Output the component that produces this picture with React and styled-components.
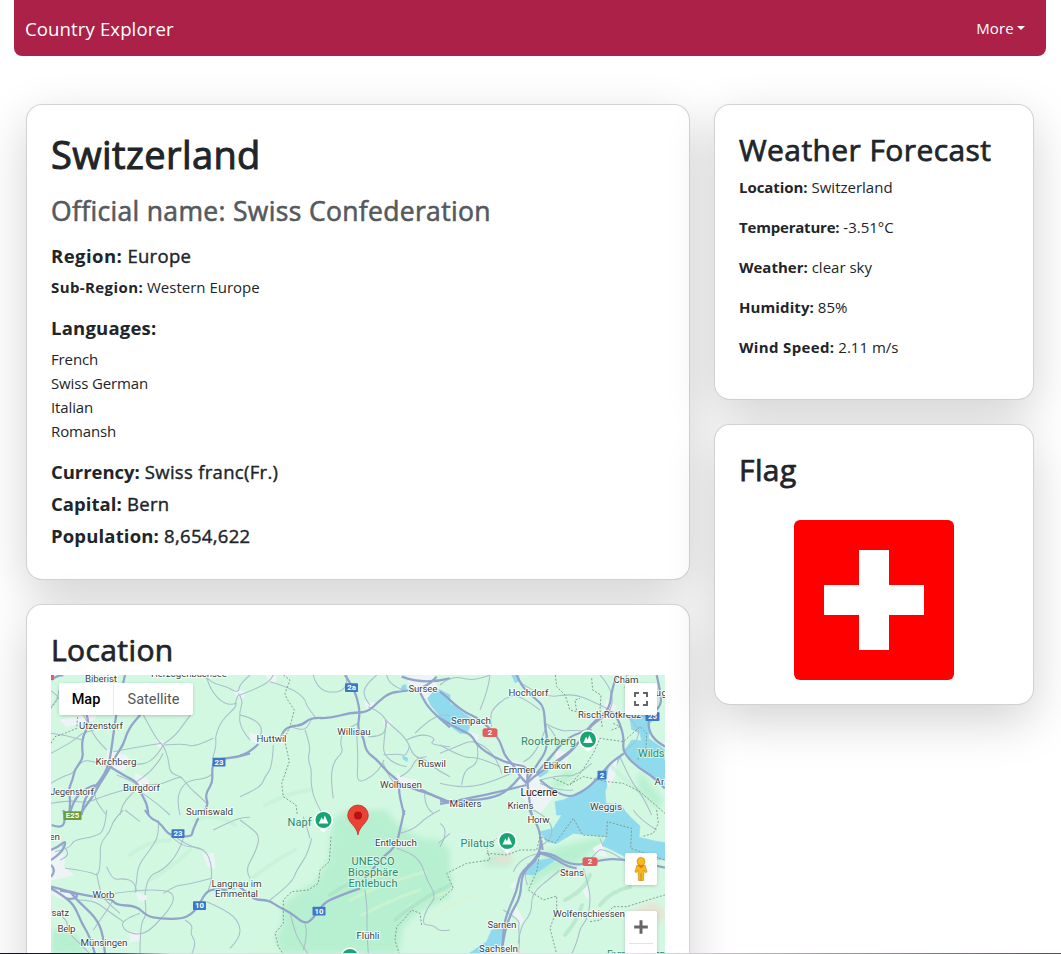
import React from "react";
import styled, { createGlobalStyle } from "styled-components";

const GlobalStyle = createGlobalStyle`
  *, *::before, *::after { box-sizing: border-box; }
  body {
    margin: 0;
    height: 954px;
    overflow: hidden;
    background: #fff;
    color: #212529;
    font-family: "Open Sans", "Noto Sans", sans-serif;
    font-size: 15px;
    line-height: 24px;
  }
  h1, h2, h3, h5, p, ul { margin: 0; padding: 0; }
`;

const Page = styled.div`
  position: relative;
  height: 954px;
  padding: 0 15px 0 14px;
  overflow: hidden;
`;

const Navbar = styled.nav`
  display: flex;
  align-items: center;
  justify-content: space-between;
  height: 56px;
  padding: 2px 21px 0 11px;
  border-radius: 0 0 8px 8px;
  background: #ab2148;
  color: #fff;
`;

const Brand = styled.span`
  font-size: 18.6px;
  line-height: 30px;
  letter-spacing: 0.1px;
`;

const MoreButton = styled.button`
  display: flex;
  align-items: center;
  gap: 3px;
  margin-bottom: 2px;
  padding: 0;
  border: 0;
  background: none;
  color: #fff;
  font: inherit;
  letter-spacing: 0.2px;
`;

const Caret = styled.span`
  border-top: 4.5px solid #fff;
  border-left: 4.5px solid transparent;
  border-right: 4.5px solid transparent;
`;

const Columns = styled.main`
  display: grid;
  grid-template-columns: 664px 320px;
  gap: 24px;
  padding: 48px 12px 0;
`;

const Column = styled.div`
  display: flex;
  flex-direction: column;
  gap: 24px;
`;

const Card = styled.section`
  flex: none;
  height: ${(p) => p.$height}px;
  padding: 24px;
  border: 1px solid rgba(0, 0, 0, 0.175);
  border-radius: 16px;
  background: #fff;
  box-shadow: 0 16px 48px rgba(0, 0, 0, 0.175);
`;

const CountryName = styled.h1`
  font-size: 38px;
  font-weight: 400;
  line-height: 50px;
  letter-spacing: 0.4px;
  -webkit-text-stroke: 1px currentColor;
  margin-bottom: 14px;
`;

const OfficialName = styled.h3`
  color: #55595d;
  font-size: 26.5px;
  font-weight: 400;
  line-height: 36px;
  letter-spacing: 0.33px;
  -webkit-text-stroke: 0.6px currentColor;
  margin-bottom: 14px;
`;

const CardTitle = styled.h2`
  font-size: 30px;
  font-weight: 400;
  line-height: 41px;
  letter-spacing: 0.4px;
  -webkit-text-stroke: 0.75px currentColor;
  margin-bottom: 5px;
`;

const Bold = styled.b`
  font-weight: 700;
  letter-spacing: ${(p) => p.$track || 0}px;
  -webkit-text-stroke: 0;
`;

const Fact = styled.h5`
  font-size: 18.5px;
  font-weight: 400;
  line-height: 26px;
  letter-spacing: 0.3px;
  -webkit-text-stroke: 0.4px currentColor;
  margin-bottom: 6px;
`;

const Line = styled.p`
  margin-bottom: 16px;
`;

const LanguageList = styled.ul`
  list-style: none;
  margin-bottom: 16px;
  letter-spacing: -0.13px;
`;

const FlagImage = styled.svg`
  display: block;
  width: 160px;
  height: 160px;
  margin: 30px auto 0;
  border-radius: 6px;
`;

const MapFrame = styled.div`
  position: relative;
  width: 614px;
  height: 450px;
  overflow: hidden;
  background: #d3f8e2;
  font-family: Roboto, sans-serif;
`;

const MapDrawing = styled.svg`
  display: block;
  width: 614px;
  height: 279px;
`;

const MapTypes = styled.div`
  position: absolute;
  top: 8px;
  left: 8px;
  display: flex;
  border-radius: 2px;
  background: #fff;
  box-shadow: 0 1px 4px -1px rgba(0, 0, 0, 0.3);
`;

const MapType = styled.button`
  width: ${(p) => p.$width}px;
  height: 32px;
  padding: 0;
  border: 0;
  border-left: ${(p) => (p.$active ? "0" : "1px solid #ececec")};
  background: none;
  color: ${(p) => (p.$active ? "#000" : "#565656")};
  font: ${(p) => (p.$active ? 500 : 400)} 14.5px Roboto, sans-serif;
`;

const MapControl = styled.button`
  position: absolute;
  top: ${(p) => p.$top}px;
  right: 8px;
  display: flex;
  align-items: flex-start;
  justify-content: center;
  width: 32px;
  height: ${(p) => p.$height || 32}px;
  padding: 0;
  border: 0;
  border-radius: 2px;
  background: #fff;
  box-shadow: 0 1px 4px -1px rgba(0, 0, 0, 0.3);
`;

const WindowEdge = styled.div`
  position: absolute;
  left: 0;
  right: 0;
  bottom: 0;
  height: 1px;
  background: linear-gradient(90deg, #17122b 0, #17122b 80px, #4b3a5c 120px, #e8d4ea 170px, #eadcf0 630px, #cfc4d0 700px, #57505a 1061px);
`;

// Each tile holds its geometry in its own units, three to a pixel.
const tiles = [
  {
    at: [40, 670],
    urban: ["M60 150L170 135L160 150L80 170Z", "M205 240L265 260L255 300L200 290Z", "M285 310L325 330L320 370L290 355Z", "M350 210L375 215L372 232L355 230Z", "M580 60L615 66L608 84L590 78Z"],
    minor: ["M33 62L60 80L88 135", "M33 250L80 225L110 205L125 190L150 185L205 160", "M630 15L600 40L595 70L560 50L520 40L500 22L475 15", "M595 70L610 90L598 125L600 175L630 210", "M595 75L585 95L590 110L545 150L525 200L530 225L518 265", "M500 22L510 60L560 110L590 100", "M310 135L350 210L370 225L385 265L390 310L425 320L450 355L480 380L500 400", "M370 225L430 220L455 230L500 215L520 205", "M370 222L400 205L440 150L455 130", "M220 245L300 230L365 220", "M205 290L250 280L310 285L350 260L370 225", "M290 335L345 300L370 250", "M310 345L360 345L400 325L425 320", "M420 435L410 390L425 350L450 330L505 325L518 310", "M33 340L65 320L100 310L125 270L165 275L205 290", "M33 190L80 195L128 210", "M205 300L170 340L160 390L200 435", "M230 315L270 330L300 350L245 400L240 435", "M160 15L145 35L160 60", "M33 110L55 90L57 60", "M300 365L340 390L390 435", "M130 135L145 160L165 205L200 240", "M33 400L90 390L140 400L210 370L290 350"],
    major: ["M255 15L245 60L228 135L220 195L214 240L205 290L178 338L144 370L130 400L125 435", "M305 130L278 160L260 190L250 225L225 260L207 300L180 340L155 385L135 410L120 435", "M140 135L149 162L128 198L126 235L130 265L104 298L98 330L86 355L92 400L87 435", "M210 290L250 315L294 338L302 370L323 405L325 435", "M630 250L594 262L522 268L516 300L518 338L500 365L498 385L505 405L488 435", "M165 345L140 352L100 390L88 435", "M35 30L46 17L70 15"],
    dashed: ["M33 220L45 200L75 190L110 175L113 140", "M33 115L55 85"],
  },
  {
    at: [240, 670],
    urban: ["M80 15L110 20L105 40L85 32Z", "M30 190L60 198L52 220L35 214Z", "M375 95L405 100L400 118L380 115Z", "M430 150L455 155L450 168L434 165Z", "M500 20L580 15L590 50L560 85L520 60Z", "M470 310L490 325L530 330L520 350L480 345Z"],
    minor: ["M0 75L40 60L90 35L100 15", "M90 35L150 52L195 85L200 110L225 140", "M0 135L40 145L70 175L60 200", "M100 225L97 290L75 320L60 355L0 380", "M155 170L185 182L205 170L215 145", "M195 180L213 230L203 265L215 300L212 340L225 395L250 435", "M355 160L310 180L300 220L310 245L280 275L272 330L280 385", "M350 190L355 270L350 330L370 335L420 300L432 270", "M385 200L430 200L440 160L435 150", "M385 110L420 125L440 155L500 205L520 260L560 270L590 300L630 320", "M500 210L540 190L590 205L565 225L630 230", "M525 190L560 155L610 130L630 138", "M430 255L475 250L500 260L508 230", "M440 155L430 220L432 255L470 285L500 290", "M320 15L325 60L260 70L225 40L220 15", "M390 105L370 80L375 45L410 15", "M480 320L510 305L530 260L560 260", "M555 360L550 410L580 430", "M430 280L445 325L475 350", "M440 15L445 45L490 60"],
    major: ["M0 257L30 248L55 222", "M122 205L130 180L155 168L185 166L213 143L270 145L330 128L383 127L415 95L450 68L490 64L560 53L590 20", "M315 15L335 45L352 85L360 130L352 175L370 200L378 245L410 268L445 310L480 335L475 370L493 435", "M535 55L550 90L580 130L630 172", "M485 20L550 45L630 25", "M540 358L590 382L628 397", "M480 340L530 360L565 370L625 395"],
    dashed: ["M130 15L150 30L135 70L140 85L163 120L150 170L138 195L135 215L148 275L125 340L130 380L168 405L172 435"],
    water: ["M555 65L575 67L597 58L630 75L630 155L605 145L572 105Z", "M485 48L497 43L500 60L486 65Z", "M488 258L503 264L501 275L490 268Z"],
  },
  {
    at: [440, 670],
    terrain: ["M330 345L380 300L420 310L350 360Z", "M600 300L670 390L650 420L590 350Z"],
    urban: ["M185 265L255 285L300 325L335 385L300 430L245 380L225 300Z", "M350 240L385 250L380 275L350 265Z", "M500 90L530 110L510 135L490 125Z", "M95 190L115 195L112 210L97 208Z", "M510 285L530 270L525 315L505 350L500 330Z"],
    minor: ["M0 45L35 15L100 35L150 15", "M150 15L145 60L120 120", "M0 250L60 225L100 210L150 240L180 290L185 310", "M155 170L150 140L160 115L200 80L240 75L300 120", "M245 40L310 85L400 70L460 95L510 120", "M315 160L360 185L400 180L440 185L455 160", "M320 165L290 260L250 275", "M325 170L350 200L355 240L320 280", "M0 340L60 355L150 340L235 300", "M110 215L115 240L110 285L70 300L65 345", "M180 290L115 260L70 265L0 225", "M300 330L355 315L410 320L455 280", "M300 340L350 365L400 360", "M540 260L570 330L610 380L635 435", "M550 130L600 170L590 220L555 240", "M560 15L555 55", "M480 15L510 50L520 100L500 140L450 170"],
    major: ["M0 65L20 80L45 105L80 130L115 145L155 180L182 215L192 255L220 285L240 320L260 340", "M0 145L60 180L95 195L110 225L165 265L220 283L265 290L260 340L275 435", "M230 15L245 50L285 85L312 110L315 170L322 205L318 245L290 285L260 335", "M0 394L60 393L150 386L205 363L240 320", "M0 402L110 380L200 360L260 345", "M260 340L280 320L320 295L410 230L445 175L480 145L510 110L515 60L530 15", "M330 290L380 260L430 200L460 155L515 115L540 160L552 205L548 245L590 290L640 320L675 355", "M300 330L370 390L440 360L495 300L515 275L552 250", "M455 180L395 190L340 250L290 310", "M650 15L665 80L660 110L635 130L622 165L640 210L675 230"],
    dashed: ["M346 15L350 50L375 75L390 120L410 125L405 90L420 85", "M455 25L458 60L483 75L480 120L487 175", "M520 160L540 170L515 180", "M390 345L425 305L460 250L480 205L550 215L600 170L620 190L617 250L590 270", "M340 325L385 345L430 320L500 335L550 340L600 365L675 430"],
    water: ["M0 80L45 110L100 150L80 190L60 190L0 145Z", "M215 15L235 15L240 32L225 38Z", "M570 90L600 80L655 135L630 160L625 205L675 240L675 345L630 315L570 265L555 240L575 210L605 212L600 190L575 178L566 120Z", "M345 395L370 390L390 380L440 355L490 305L515 275L545 255L510 325L495 365L498 400L545 405L560 435L350 435Z", "M270 330L325 298L322 308L280 333Z"],
  },
  {
    at: [40, 810],
    terrain: ["M33 360L70 350L120 385L145 432L33 432Z"],
    urban: ["M33 115L75 135L70 170L100 195L33 210Z", "M60 240L110 250L90 275L33 250Z", "M270 365L300 370L300 390L270 395Z", "M490 135L520 130L525 175L505 170Z", "M290 250L320 258L315 275L295 270Z"],
    minor: ["M200 0L195 60L165 80L100 90L90 115L45 125", "M75 175L150 185L175 200L182 150L180 100L210 65L220 30L250 0", "M60 150L85 140L80 115L65 105", "M355 30L358 75L330 120L295 165L290 210L285 248", "M520 60L560 40L610 20L630 22", "M430 85L415 130L370 180L320 200L315 255", "M375 60L420 110L480 110L510 140L518 210L505 240", "M395 70L430 105L490 120", "M225 250L300 240L370 240L400 250L400 280L365 325L325 365L290 375L250 360L245 330L300 310", "M200 170L215 210L250 205L285 215L290 245", "M170 190L180 250L205 280L240 310", "M315 270L322 315L300 340L300 432", "M500 275L560 300L600 340L600 385L570 415", "M435 330L460 345L450 370L470 400L455 432", "M370 250L410 225L440 225L515 205", "M33 300L80 320L85 370L120 400L150 432", "M220 270L195 310L160 360", "M250 335L200 300L160 270L110 270", "M300 35L255 0"],
    major: ["M315 0L330 25L357 35L375 60L390 75L455 82L458 60L475 25", "M33 230L90 245L130 255L185 263L215 268L230 285L290 288L320 318L360 326L425 327L455 312L475 290L495 250L520 235L560 240", "M33 150L65 130L80 90L55 110L33 120", "M70 0L78 35L60 55L35 45", "M33 235L75 260L105 290L125 340L150 380L165 432", "M90 245L115 275L165 320L190 370L195 432", "M60 242L120 250L100 270L80 265", "M33 165L50 180L33 200"],
    dashed: [],
    water: ["M33 155L38 155L38 165L33 170Z", "M560 235L585 233L585 238L562 240Z"],
  },
  {
    at: [240, 810],
    terrain: ["M325 0L285 20L275 40L265 150L225 215L175 245L130 280L125 345L105 385L125 432L475 432L490 350L530 310L630 260L630 120L600 90L540 85L470 40L440 0Z"],
    minor: ["M0 30L35 55L60 80L45 130L15 180L30 205", "M215 85L205 130L170 180L155 220L90 270", "M375 240L382 290L380 360L385 432", "M150 305L160 350L175 390L205 432", "M195 340L205 370L190 420", "M470 115L515 130L545 160L560 210L590 260L560 295L545 345L580 345L600 365L630 360", "M480 70L520 60L560 20L600 0", "M210 85L200 50L190 20", "M595 100L630 70"],
    major: ["M0 232L25 250L45 270L85 270L115 290L155 310L195 343L220 325L250 280L290 260L360 235", "M493 0L480 60L470 100L450 125L430 140L400 175L375 205"],
    dashed: ["M273 80L268 155L240 180L235 220L205 240L155 245L130 270L130 340L105 370L115 410L130 432", "M545 345L540 310L515 300L490 330L470 350L465 390L478 432"],
  },
  {
    at: [440, 810],
    terrain: ["M130 150L200 115L215 165L140 170Z", "M320 120L480 80L510 85L390 175L310 200L265 245L270 190Z", "M0 170L40 210L0 260Z"],
    urban: ["M230 295L250 330L240 345L220 310Z", "M460 115L485 100L500 140L470 132Z", "M430 240L445 230L445 265L438 262Z", "M210 230L225 215L220 235Z"],
    minor: ["M0 110L30 60L0 40", "M280 0L330 25L340 85L300 110", "M360 180L330 205L275 250L275 310L240 350L235 400", "M430 175L450 240L450 290L440 330L420 355L410 400L395 432", "M440 165L460 135L490 110L550 150", "M490 110L480 85", "M190 300L240 330L235 350L240 395L235 432", "M600 160L630 130", "M300 130L240 140L220 185", "M265 160L250 195L262 225", "M580 0L600 30L650 60"],
    major: ["M268 0L290 40L303 80L300 125L275 160L240 190L230 245L205 300L190 350L185 432", "M300 130L285 155L245 190L242 260L215 305L195 360L188 405", "M300 128L335 130L380 160L430 165L480 150L550 145L675 173", "M295 130L330 135L380 170L410 175", "M303 90L308 120"],
    dashed: ["M0 270L40 235L20 190L80 160L150 150L140 110L170 85", "M140 130L200 135L240 120L290 120L300 80L345 100L400 25L428 75L500 80L502 35L575 55L572 115L675 150", "M300 125L290 185L265 240L310 270L350 258L350 300L330 355L350 432", "M450 335L480 330L520 290L560 290L640 265L675 255", "M650 0L655 40L640 70L605 80"],
    water: ["M300 65L340 55L375 0L552 0L575 25L600 48L597 82L640 92L675 98L675 150L560 142L485 105L500 80L400 70L350 100L320 95Z", "M275 155L355 142L345 150L310 175L280 195L247 192Z", "M155 360L190 355L180 405L140 432L85 432L140 395Z"],
    sand: ["M175 140L205 120L220 150L200 165L140 160Z", "M590 295L640 275L675 300L675 330L560 345Z"],
  },
];

const places = [
  ["Biberist", 101, 682, 32], ["Herzogenbuchsee", 189, 677, 76], ["Utzenstorf", 101, 729, 44],
  ["Kirchberg", 116, 765, 41], ["Burgdorf", 141.5, 790.5, 37], ["Jegenstorf", 72, 795, 44],
  ["Sumiswald", 209.5, 814.5, 47], ["Huttwil", 271.5, 742, 30], ["Willisau", 354, 734.5, 33.5],
  ["Sursee", 423, 692, 29], ["Ruswil", 432, 766.5, 28], ["Wolhusen", 401, 788, 42],
  ["Hochdorf", 528.5, 696, 40], ["Sempach", 471, 724, 40], ["Cham", 626, 683, 25],
  ["Risch-Rotkreuz", 609.5, 717.5, 63], ["Emmen", 519.5, 772.5, 32], ["Ebikon", 557.5, 769, 28],
  ["Malters", 465.5, 807, 32], ["Kriens", 520.5, 809, 26], ["Weggis", 606, 810, 32],
  ["Zug", 658, 696, 18], ["Arth", 664, 785, 19], ["Horw", 538.5, 822.5, 22],
  ["Stans", 572, 876, 24], ["Wolfenschiessen", 589, 917, 72], ["Sarnen", 502, 927.5, 29],
  ["Sachseln", 498.5, 952, 39], ["Entlebuch", 396, 846, 42], ["Flühli", 368, 938.5, 23],
  ["Langnau im", 236.5, 886.5, 50], ["Emmental", 236.5, 896.5, 43], ["Worb", 103.5, 898, 22],
  ["Belp", 66.5, 931.5, 18], ["Münsingen", 104, 946, 47], ["Ostermundigen", 27, 840, 66],
  ["Kehrsatz", 51, 915.5, 36],
];

const parks = [
  ["Rooterberg", 548.5, 745, 55], ["Napf", 299.5, 826, 24], ["Pilatus", 477.5, 846.5, 34],
  ["UNESCO", 373, 864.5, 43], ["Biosphäre", 373, 875.8, 50], ["Entlebuch", 373, 887, 49],
  ["Wildspitz", 660, 756.5, 44], ["Brunni-Haggenegg", 636, 958, 58],
];

const shields = [
  ["2a", 351.5, 687.5, 13], ["23", 219, 762, 13], ["23", 178, 833.5, 13], ["10", 199.5, 905.5, 13],
  ["10", 319, 911, 13], ["2", 602, 775, 9], ["25", 652.5, 716.5, 14], ["E25", 72.5, 815.5, 18, "#6a9d3f"],
  ["2", 490, 732.5, 15, "#e0605f"], ["2", 590, 861.5, 15, "#e0605f"],
];

const peaks = [[323.5, 820], [588, 739.5], [507.3, 841], [350, 957]];

// Rounds the corners of a road given as "M x y L x y ...".
function curve(d) {
  const pts = d.slice(1).split("L").map((p) => p.split(" ").map(Number));
  if (pts.length < 3) return d;
  let out = `M${pts[0].join(" ")}`;
  for (let i = 1; i < pts.length - 2; i += 1) {
    const [x, y] = pts[i];
    const [nx, ny] = pts[i + 1];
    out += `Q${x} ${y} ${(x + nx) / 2} ${(y + ny) / 2}`;
  }
  return `${out}Q${pts[pts.length - 2].join(" ")} ${pts[pts.length - 1].join(" ")}`;
}

function Peak({ x, y }) {
  return (
    <g transform={`translate(${x} ${y})`}>
      <path d="M0 12.5L-5 8A9.5 9.5 0 1 1 5 8Z" fill="#fff" />
      <circle r="8" fill="#17a673" />
      <path d="M-4.8 3.6L-1.9 -2.8L-.3 .2L1.3 -4.6L4.8 3.6Z" fill="#fff" />
    </g>
  );
}

function TerrainMap() {
  return (
    <MapDrawing viewBox="51 675 614 279">
      <defs>
        <filter id="soft" x="-20%" y="-20%" width="140%" height="140%"><feGaussianBlur stdDeviation="9" /></filter>
      </defs>
      <rect x="51" y="675" width="614" height="279" fill="#d3f8e2" />
      {tiles.map((t) => (
        <g key={t.at.join()} transform={`translate(${t.at[0]} ${t.at[1]}) scale(.33333)`} fill="none" strokeLinejoin="round">
          {(t.terrain || []).map((d) => <path key={d} d={d} fill="#b7f0d0" filter="url(#soft)" />)}
          {(t.sand || []).map((d) => <path key={d} d={d} fill="#e6e3d4" filter="url(#soft)" />)}
          {(t.water || []).map((d) => <path key={d} d={d} fill="#90daee" stroke="#90daee" strokeWidth="2" />)}
          {(t.urban || []).map((d) => <path key={d} d={d} fill="#eef4f6" stroke="#eef4f6" strokeWidth="3" />)}
        </g>
      ))}
      <g fill="none" strokeLinecap="round" opacity=".55">
        <path d="M350 900Q385 882 425 872M362 915Q390 900 420 890M405 910Q425 895 455 892M425 925Q450 900 475 895" stroke="#d7f6cf" strokeWidth="3" />
        <path d="M330 895Q350 880 365 882M395 920Q415 902 450 885M565 900Q585 890 590 875M565 935Q578 920 582 905M600 905Q612 890 630 887" stroke="#a9dfc4" strokeWidth="4" />
        <path d="M130 855Q150 840 170 840M150 880Q175 865 190 850M195 820Q215 812 235 825M265 805Q290 792 310 790M250 880Q275 860 295 850M610 765Q630 785 650 800" stroke="#c2efd6" strokeWidth="4" />
      </g>
      {tiles.map((t) => (
        <g key={t.at.join()} transform={`translate(${t.at[0]} ${t.at[1]}) scale(.33333)`} fill="none" strokeLinejoin="round">
          {t.minor.map((d) => <path key={d} d={curve(d)} stroke="#a9bfca" strokeWidth="3.2" />)}
          {t.major.map((d) => <path key={d} d={curve(d)} stroke="#93a4cb" strokeWidth="6.8" />)}
          {t.dashed.map((d) => <path key={d} d={d} stroke="#7e958c" strokeWidth="2.8" strokeDasharray="6 5" />)}
        </g>
      ))}
      <path d="M51 675h3v5h-3z" fill="#e0605f" />
      {peaks.map(([x, y]) => <Peak key={x} x={x} y={y} />)}
      {shields.map(([label, x, y, w, fill = "#3d77c9"]) => (
        <g key={`${x}-${y}`}>
          <rect x={x - w / 2} y={y - 4.3} width={w} height="8.8" rx={w === 15 ? 2.5 : 0.8} fill={fill} />
          <text x={x} y={y + 2.9} fontSize="7.8" fontWeight="700" fill="#fff" textAnchor="middle">{label}</text>
        </g>
      ))}
      <g fontSize="9.8" fill="#3c4043" stroke="#fff" strokeWidth="2" strokeOpacity=".8" paintOrder="stroke" strokeLinejoin="round">
        {places.map(([name, x, y, w]) => (
          <text key={name} x={x - w / 2} y={y} textLength={w}>{name}</text>
        ))}
        <text x="520.5" y="796" fontSize="10.8" fill="#202124" textLength="37">Lucerne</text>
      </g>
      <g fontSize="11" fill="#2b8a6c" stroke="#e4faed" strokeWidth="1.8" strokeOpacity=".8" paintOrder="stroke">
        {parks.map(([name, x, y, w]) => (
          <text key={name} x={x - w / 2} y={y} textLength={w}>{name}</text>
        ))}
      </g>
      <path d="M358 835C357 826 347.7 823 347.7 815.3A10.3 10.3 0 0 1 368.3 815.3C368.3 823 359 826 358 835Z" fill="#ea4335" stroke="#c5221f" strokeWidth=".7" />
      <circle cx="358" cy="815.5" r="4" fill="#b31412" />
    </MapDrawing>
  );
}

const languages = ["French", "Swiss German", "Italian", "Romansh"];

const weather = [
  ["Location:", "Switzerland", -0.05],
  ["Temperature:", "-3.51°C", -0.2],
  ["Weather:", "clear sky", 0],
  ["Humidity:", "85%", 0.1],
  ["Wind Speed:", "2.11 m/s", 0.35],
];

export default function App() {
  return (
    <Page>
      <GlobalStyle />
      <Navbar>
        <Brand>Country Explorer</Brand>
        <MoreButton>More<Caret /></MoreButton>
      </Navbar>
      <Columns>
        <Column>
          <Card $height={476}>
            <CountryName>Switzerland</CountryName>
            <OfficialName>Official name: Swiss Confederation</OfficialName>
            <Fact><Bold $track={0.45}>Region:</Bold> Europe</Fact>
            <Line><Bold $track={0.4}>Sub-Region:</Bold> Western Europe</Line>
            <Fact><Bold $track={0.2}>Languages:</Bold></Fact>
            <LanguageList>
              {languages.map((name) => <li key={name}>{name}</li>)}
            </LanguageList>
            <Fact><Bold $track={-0.05}>Currency:</Bold> Swiss franc(Fr.)</Fact>
            <Fact><Bold $track={0.05}>Capital:</Bold> Bern</Fact>
            <Fact><Bold $track={0.15}>Population:</Bold> 8,654,622</Fact>
          </Card>
          <Card $height={500}>
            <CardTitle>Location</CardTitle>
            <MapFrame>
              <TerrainMap />
              <MapTypes>
                <MapType $active $width={54}>Map</MapType>
                <MapType $width={80}>Satellite</MapType>
              </MapTypes>
              <MapControl $top={8}>
                <svg width="32" height="32" fill="none" stroke="#666" strokeWidth="2">
                  <path d="M10 14V10H14M18 10H22V14M22 18V22H18M14 22H10V18" />
                </svg>
              </MapControl>
              <MapControl $top={178}>
                <svg width="32" height="32">
                  <path d="M11.8 12.5Q16 10.5 20.2 12.5L22 19L20.3 19.5L19 17L18.5 27.5H13.5L13 17L11.7 19.5L10 19Z" fill="#fbb81b" stroke="#b8860f" strokeWidth=".6" />
                  <path d="M12.5 12.3H19.5L16 15.5Z" fill="#e8711c" />
                  <path d="M16 20V27.5" stroke="#b8860f" strokeWidth=".8" />
                  <circle cx="16" cy="8.5" r="4" fill="#fbb81b" stroke="#b8860f" strokeWidth=".6" />
                </svg>
              </MapControl>
              <MapControl $top={236} $height={66}>
                <svg width="32" height="34">
                  <path d="M16 9.2V22.8M9.2 16H22.8" stroke="#666" strokeWidth="3" />
                  <path d="M4 32.5H28" stroke="#e2e2e2" />
                </svg>
              </MapControl>
            </MapFrame>
          </Card>
        </Column>
        <Column>
          <Card $height={296}>
            <CardTitle>Weather Forecast</CardTitle>
            {weather.map(([label, value, track]) => (
              <Line key={label}><Bold $track={track}>{label}</Bold> {value}</Line>
            ))}
          </Card>
          <Card $height={281}>
            <CardTitle>Flag</CardTitle>
            <FlagImage viewBox="0 0 32 32">
              <path d="M0 0h32v32H0z" fill="#f00" />
              <path d="M13 6h6v7h7v6h-7v7h-6v-7H6v-6h7z" fill="#fff" />
            </FlagImage>
          </Card>
        </Column>
      </Columns>
      <WindowEdge />
    </Page>
  );
}
